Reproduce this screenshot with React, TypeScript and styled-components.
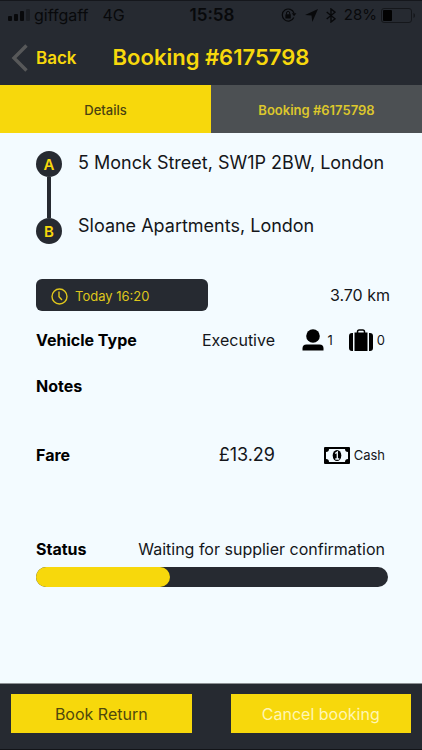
import React from "react";
import styled, { createGlobalStyle } from "styled-components";

const dark = "#262a31";
const yellow = "#f7d80c";

const GlobalStyle = createGlobalStyle`
  * { box-sizing: border-box; }
  body {
    margin: 0;
    background: #f3fbff;
    font-family: Inter, "Liberation Sans", sans-serif;
    color: #14161a;
  }
  button { font-family: inherit; cursor: pointer; }
`;

const Page = styled.div`
  display: flex;
  flex-direction: column;
  min-height: 100vh;
`;

const Header = styled.header`
  background: ${dark};
  border-top: 1px solid #15171c;
`;

const StatusBar = styled.div`
  display: grid;
  grid-template-columns: 1fr auto 1fr;
  align-items: center;
  height: 28px;
  padding: 0 6px 0 8px;
  color: #08090b;
  font-size: 16px;
  line-height: 20px;
`;

const Carrier = styled.div`
  display: flex;
  align-items: center;
  gap: 4px;
`;

const Network = styled.span`
  margin-left: 10px;
`;

const Clock = styled.time`
  font-weight: 600;
  font-size: 17px;
`;

const Indicators = styled.div`
  display: flex;
  align-items: center;
  justify-content: flex-end;
  gap: 8px;
`;

const Battery = styled.span`
  display: flex;
  align-items: center;
  gap: 4px;
  font-size: 15px;
`;

const NavBar = styled.div`
  display: grid;
  grid-template-columns: 1fr auto 1fr;
  align-items: center;
  height: 56px;
  padding: 0 10px;
  color: ${yellow};
`;

const BackButton = styled.button`
  display: flex;
  align-items: center;
  gap: 8px;
  padding: 2px 0 0;
  border: 0;
  background: none;
  color: ${yellow};
  font-size: 17px;
  font-weight: 600;
  line-height: 20px;
`;

const Title = styled.h1`
  margin: 0;
  font-size: 22px;
  font-weight: 600;
  line-height: 28px;
`;

const Tabs = styled.div`
  display: grid;
  grid-template-columns: 1fr 1fr;
  height: 48px;
`;

const Tab = styled.button<{ $active?: boolean }>`
  border: 0;
  padding: 2px 0 0;
  background: ${(p) => (p.$active ? yellow : "#4c5053")};
  color: ${(p) => (p.$active ? "#4a4210" : "#dcc72c")};
  font-size: 13px;
  font-weight: ${(p) => (p.$active ? 500 : 600)};
  line-height: 16px;
`;

const Main = styled.main`
  flex: 1;
  padding: 18px 32px 24px 36px;
`;

const Route = styled.section`
  display: flex;
  gap: 16px;
`;

const Rail = styled.div`
  display: flex;
  flex-direction: column;
  align-items: center;
`;

const Stop = styled.span`
  display: flex;
  align-items: center;
  justify-content: center;
  width: 26px;
  height: 26px;
  border-radius: 50%;
  background: ${dark};
  color: ${yellow};
  font-size: 15px;
  font-weight: 600;
`;

const Track = styled.span`
  width: 4px;
  height: 41px;
  background: ${dark};
`;

const Addresses = styled.div`
  display: flex;
  flex-direction: column;
  gap: 39px;
  font-size: 18px;
  line-height: 24px;
`;

const Trip = styled.section`
  display: flex;
  align-items: center;
  justify-content: space-between;
  margin-top: 35px;
  font-size: 16px;
`;

const Pickup = styled.div`
  display: flex;
  align-items: center;
  gap: 7px;
  flex: 0 0 172px;
  height: 32px;
  padding: 2px 15px 0;
  border-radius: 6px;
  background: ${dark};
  color: #dfc61c;
  font-size: 13px;
`;

const Row = styled.section<{ $gap: number }>`
  display: grid;
  grid-template-columns: 1fr auto 110px;
  align-items: center;
  min-height: 24px;
  margin-top: ${(p) => p.$gap}px;
  padding-right: 5px;
  font-size: 16px;
  line-height: 24px;
`;

const StatusRow = styled(Row)`
  grid-template-columns: 1fr auto;
`;

const Label = styled.h2`
  margin: 0;
  font-size: 16px;
  font-weight: 700;
  line-height: 24px;
  color: #000;
`;

const Amount = styled.span`
  font-size: 18px;
`;

const Extras = styled.div`
  display: flex;
  align-items: center;
  justify-content: flex-end;
  gap: 16px;
  font-size: 13px;
`;

const Extra = styled.span`
  display: flex;
  align-items: center;
  gap: 4px;
`;

const Progress = styled.div`
  height: 20px;
  margin: 6px 2px 0 0;
  border-radius: 10px;
  background: ${dark};
`;

const ProgressFill = styled.div`
  height: 100%;
  border-radius: 10px;
  background: ${yellow};
`;

const Footer = styled.footer`
  display: grid;
  grid-template-columns: 1fr 1fr;
  gap: 39px;
  padding: 10px 11px 16px;
  border-top: 1px solid #8d9194;
  border-bottom: 1px solid #121418;
  background: ${dark};
`;

const Action = styled.button<{ $light?: boolean }>`
  height: 39px;
  padding: 0;
  border: 0;
  background: ${yellow};
  color: ${(p) => (p.$light ? "#fff6b4" : "#4f480c")};
  font-size: 16px;
`;

const SignalIcon = () => (
  <svg width="22" height="12" viewBox="0 0 22 12" fill="currentColor" aria-hidden="true">
    <rect x="0" y="7" width="4" height="5" rx="1" />
    <rect x="6" y="5" width="4" height="7" rx="1" />
    <rect x="12" y="2" width="4" height="10" rx="1" />
    <rect x="18" y="0" width="4" height="12" rx="1" opacity="0.35" />
  </svg>
);

const RotationLockIcon = () => (
  <svg width="16" height="14" viewBox="0 0 16 14" fill="none" aria-hidden="true">
    <path d="M12.8 9.4A6 6 0 1 1 13 5.2" stroke="currentColor" strokeWidth="1.2" />
    <path d="M10.8 5.2h4.6l-2.3 3z" fill="currentColor" />
    <rect x="4.4" y="6.2" width="5.4" height="4.2" rx=".5" fill="currentColor" />
    <path d="M5.5 6.5V5a1.6 1.6 0 0 1 3.2 0v1.5" stroke="currentColor" strokeWidth="1" />
  </svg>
);

const LocationIcon = () => (
  <svg width="13" height="13" viewBox="0 0 13 13" fill="currentColor" aria-hidden="true">
    <path d="M13 0 7.3 13 6.5 6.6 0 6z" />
  </svg>
);

const BluetoothIcon = () => (
  <svg width="10" height="15" viewBox="0 0 10 15" fill="none" stroke="currentColor" strokeWidth="1.4" aria-hidden="true">
    <path d="M.7 4 9 10.8 5 14V1l4 3.2L.7 11" />
  </svg>
);

const BatteryIcon = () => (
  <svg width="35" height="15" viewBox="0 0 35 15" aria-hidden="true">
    <rect x=".5" y=".5" width="30" height="14" rx="2.5" fill="none" stroke="#15171b" />
    <rect x="2" y="2" width="9" height="11" rx="1" fill="#020202" />
    <path d="M32.5 5c2 .8 2 4.200 0 5z" fill="#15171b" />
  </svg>
);

const ChevronIcon = () => (
  <svg width="18" height="28" viewBox="0 0 18 28" fill="none" stroke="#575859" strokeWidth="3.4" aria-hidden="true">
    <path d="M16.5 1.5 4 14l12.5 12.5" />
  </svg>
);

const ClockIcon = () => (
  <svg width="17" height="17" viewBox="0 0 17 17" fill="none" stroke="currentColor" strokeWidth="1.4" aria-hidden="true">
    <circle cx="8.5" cy="8.5" r="7.5" />
    <path d="M8 3.5v5.2l3 3.300" />
  </svg>
);

const PersonIcon = () => (
  <svg width="22" height="22" viewBox="0 0 22 22" fill="#000" aria-hidden="true">
    <circle cx="11" cy="7" r="6.8" />
    <path d="M.5 21.5V19.500q0-4 4-4h13q4 0 4 4v2z" />
  </svg>
);

const LuggageIcon = () => (
  <svg width="24" height="22" viewBox="0 0 24 22" aria-hidden="true">
    <path d="M8.500 5V2.800Q8.500 1 10.200 1h3.600Q15.500 1 15.500 2.800V5" fill="none" stroke="#000" strokeWidth="1.500" />
    <rect x="5.500" y="3.500" width="13" height="18.500" />
    <path d="M4 4v18H3Q0 22 0 19V7Q0 4 3 4zM20 4v18h1q3 0 3-3V7q0-3-3-3z" />
  </svg>
);

const BanknoteIcon = () => (
  <svg width="26" height="17" viewBox="0 0 26 17" aria-hidden="true">
    <rect width="26" height="17" rx="1" />
    <path d="M5 2h16q0 3 3 3v7q-3 0-3 3H5q0-3-3-3V5q3 0 3-3z" fill="#f3fbff" />
    <ellipse cx="13" cy="8.5" rx="4.3" ry="5.5" />
    <path d="M11.2 6.5 13.3 5v7M11.300 12h4" fill="none" stroke="#f3fbff" strokeWidth="1.3" />
  </svg>
);

const progress = 38;

export default function App() {
  return (
    <Page>
      <GlobalStyle />
      <Header>
        <StatusBar>
          <Carrier>
            <SignalIcon />
            <span>giffgaff</span>
            <Network>4G</Network>
          </Carrier>
          <Clock>15:58</Clock>
          <Indicators>
            <RotationLockIcon />
            <LocationIcon />
            <BluetoothIcon />
            <Battery>
              28%
              <BatteryIcon />
            </Battery>
          </Indicators>
        </StatusBar>
        <NavBar>
          <BackButton type="button">
            <ChevronIcon />
            Back
          </BackButton>
          <Title>Booking #6175798</Title>
        </NavBar>
      </Header>
      <Tabs role="tablist">
        <Tab type="button" role="tab" aria-selected="true" $active>
          Details
        </Tab>
        <Tab type="button" role="tab" aria-selected="false">
          Booking #6175798
        </Tab>
      </Tabs>
      <Main>
        <Route>
          <Rail>
            <Stop>A</Stop>
            <Track />
            <Stop>B</Stop>
          </Rail>
          <Addresses>
            <span>5 Monck Street, SW1P 2BW, London</span>
            <span>Sloane Apartments, London</span>
          </Addresses>
        </Route>
        <Trip>
          <Pickup>
            <ClockIcon />
            Today 16:20
          </Pickup>
          <span>3.70 km</span>
        </Trip>
        <Row $gap={17}>
          <Label>Vehicle Type</Label>
          <span>Executive</span>
          <Extras>
            <Extra>
              <PersonIcon />1
            </Extra>
            <Extra>
              <LuggageIcon />0
            </Extra>
          </Extras>
        </Row>
        <Row $gap={22}>
          <Label>Notes</Label>
        </Row>
        <Row $gap={45}>
          <Label>Fare</Label>
          <Amount>£13.29</Amount>
          <Extras>
            <Extra>
              <BanknoteIcon />
              Cash
            </Extra>
          </Extras>
        </Row>
        <StatusRow $gap={70}>
          <Label id="status-label">Status</Label>
          <span>Waiting for supplier confirmation</span>
        </StatusRow>
        <Progress
          role="progressbar"
          aria-labelledby="status-label"
          aria-valuemin={0}
          aria-valuemax={100}
          aria-valuenow={progress}
        >
          <ProgressFill style={{ width: `${progress}%` }} />
        </Progress>
      </Main>
      <Footer>
        <Action type="button">Book Return</Action>
        <Action type="button" $light>
          Cancel booking
        </Action>
      </Footer>
    </Page>
  );
}
